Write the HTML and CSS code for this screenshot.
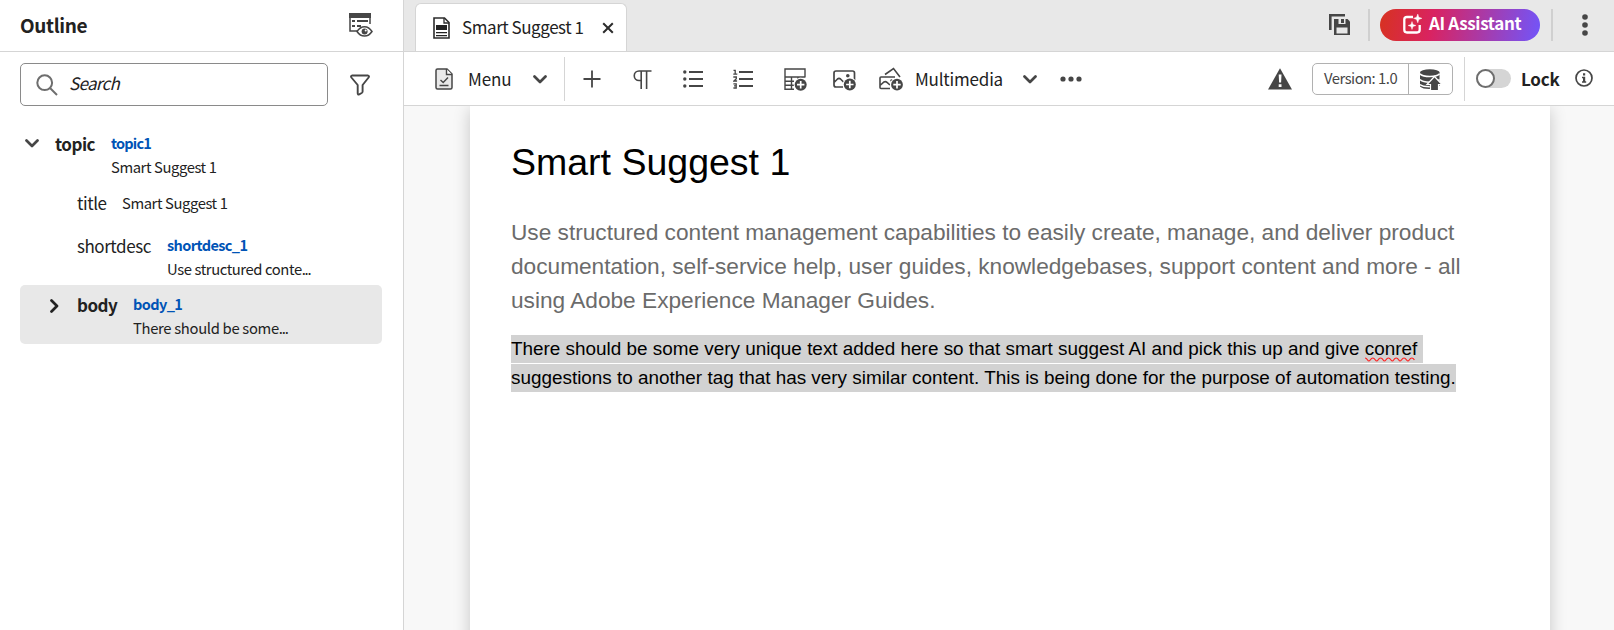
FILE: index.html
```html
<!DOCTYPE html>
<html lang="en">
<head>
<meta charset="utf-8">
<title>Smart Suggest 1</title>
<link rel="stylesheet" href="styles.css">
</head>
<body>
<div class="app">
  <aside class="sidebar">
    <header class="side-head">
      <h2 class="side-title">Outline</h2>
      <svg class="icon" width="24" height="26" viewBox="0 0 24 26"><path d="M0 1h22v5H0z" fill="#464646"/><path d="M1 5v14h7M21 5v7" fill="none" stroke="#464646" stroke-width="1.500"/><path d="M3 8h3v2H3zM8 8h11v2H8zM3 13h3v2H3zM8 13h4v2H8z" fill="#464646"/><path d="M8 19.500c4-6.500 11-6.500 15 0-4 6-11 6-15 0z" fill="#fff" stroke="#464646" stroke-width="1.500"/><circle cx="15.600" cy="19.400" r="3" fill="#464646"/><circle cx="16.700" cy="18.400" r="1" fill="#fff"/></svg>
    </header>
    <div class="search-row">
      <div class="search">
        <svg width="22" height="22" viewBox="0 0 22 22" fill="none" stroke="#6e6e6e" stroke-width="2"><circle cx="8.700" cy="8.700" r="7.400"/><path d="M14 14l7 7"/></svg>
        <span class="search-text">Search</span>
      </div>
      <svg width="20" height="22" viewBox="0 0 20 22" fill="none" stroke="#464646" stroke-width="1.900" stroke-linejoin="round"><path d="M2 1.500h16q1.600.7.6 2L12.600 11v6.500q0 1-.9 1.500l-2.500 1.300q-1.500.6-1.500-1V11L1.400 3.500q-1-1.300.6-2z"/></svg>
    </div>
    <div class="tree">
      <div class="node node-topic">
        <svg class="chev" width="14" height="9" viewBox="0 0 14 9"><path d="M1.500 1.500L7 7l5.500-5.500" /></svg>
        <span class="tag strong">topic</span>
        <div class="meta"><span class="id id-topic">topic1</span><span class="snip">Smart Suggest 1</span></div>
      </div>
      <div class="node node-title">
        <span class="tag">title</span>
        <div class="meta"><span class="snip">Smart Suggest 1</span></div>
      </div>
      <div class="node node-short">
        <span class="tag">shortdesc</span>
        <div class="meta"><span class="id">shortdesc_1</span><span class="snip">Use structured conte<span class="dots">...</span></span></div>
      </div>
      <div class="node node-body">
        <svg class="chev" width="9" height="14" viewBox="0 0 9 14"><path d="M1.500 1.500L7 7l-5.500 5.500"/></svg>
        <span class="tag strong">body</span>
        <div class="meta"><span class="id">body_1</span><span class="snip">There should be some<span class="dots">...</span></span></div>
      </div>
    </div>
  </aside>

  <main class="main">
    <div class="tabbar">
      <div class="tab">
        <svg width="17" height="22" viewBox="0 0 17 22"><path d="M1 1h10.500L16 5.500V21H1z" fill="#fff" stroke="#2c2c2c" stroke-width="1.600"/><path d="M11 1v5h5" fill="none" stroke="#2c2c2c" stroke-width="1.300"/><path d="M3 8h11v5H3zM3 15h11v1.300H3zM3 18h11v1.300H3z" fill="#222"/></svg>
        <span class="tab-label">Smart Suggest 1</span>
        <svg width="12" height="12" viewBox="0 0 12 12" stroke="#2c2c2c" stroke-width="2"><path d="M1.200 1.200l9.600 9.600M10.800 1.200l-9.600 9.600"/></svg>
      </div>
      <div class="tab-actions">
        <svg width="22" height="22" viewBox="0 0 22 22"><path d="M1.300 16V1.300H16" fill="none" stroke="#464646" stroke-width="2.600"/><path d="M5 5h13.500L21 7.500V21H5z" fill="#464646"/><path d="M9.500 5h7v5h-7zM7.500 13.500h11v6h-11z" fill="#e8e8e8"/><path d="M12 5h3v4h-3z" fill="#464646"/></svg>
        <i class="rule"></i>
        <div class="ai">
          <svg width="19" height="20" viewBox="0 0 19 20"><path d="M10 3H4Q1.300 3 1.300 5.500v10.300Q1.300 18.500 4 18.500h10q2.700 0 2.700-2.700V11" fill="none" stroke="#fff" stroke-width="2.300"/><path d="M14.800 0l1 3.300 3.200 1-3.200 1.200-1 3.300-1.300-3.300-3-1.200 3-1zM9 7.500l1 3 3 1-3 1-1 3-1-3-3-1 3-1z" fill="#fff" stroke="#fff" stroke-width=".4"/></svg>
          <span class="ai-label">AI Assistant</span>
        </div>
        <i class="rule"></i>
        <svg class="kebab" width="6" height="22" viewBox="0 0 6 22" fill="#464646"><circle cx="3" cy="3" r="2.800"/><circle cx="3" cy="11" r="2.800"/><circle cx="3" cy="19" r="2.800"/></svg>
      </div>
    </div>

    <div class="toolbar">
      <svg class="t-menu" width="18" height="22" viewBox="0 0 18 22"><path d="M2.500 1H12l5 5v13.500q0 1.500-1.500 1.500h-13Q1 21 1 19.500v-17Q1 1 2.500 1z" fill="#e9e9e9" stroke="#464646" stroke-width="1.500"/><path d="M11.500 1v5.500H17" fill="#fff" stroke="#464646" stroke-width="1.400"/><path d="M5.500 12l2.700 2.500L13 9.500M4.500 17.500h9" fill="none" stroke="#464646" stroke-width="1.400"/></svg>
      <span class="t-label w-menu">Menu</span>
      <svg class="chev t-chev" width="14" height="9" viewBox="0 0 14 9"><path d="M1.500 1.500L7 7l5.500-5.500"/></svg>
      <i class="divider"></i>
      <svg class="t-plus" width="18" height="18" viewBox="0 0 18 18" stroke="#464646" stroke-width="1.800"><path d="M9 .5v17M.5 9h17"/></svg>
      <svg class="t-para" width="19" height="19" viewBox="0 0 19 19" fill="none" stroke="#464646" stroke-width="1.600"><path d="M18.500 1H6a4.600 4.600 0 0 0 0 9.500h2.500M8.200 1v18M13.600 1v18"/></svg>
      <svg class="t-ul" width="20" height="18" viewBox="0 0 20 18"><path d="M6 2h14M6 9h14M6 16h14" stroke="#464646" stroke-width="1.900"/><g fill="#464646"><circle cx="1.800" cy="2" r="1.700"/><circle cx="1.800" cy="9" r="1.700"/><circle cx="1.800" cy="16" r="1.700"/></g></svg>
      <svg class="t-ol" width="20" height="20" viewBox="0 0 20 20"><path d="M6 3h14M6 10h14M6 17h14" stroke="#464646" stroke-width="1.900"/><g fill="none" stroke="#464646" stroke-width="1.300"><path d="M.5 1.400h1.700v4M.3 5.200h4M.3 8h3v1.700L.9 12h3.200M.4 14.800h2.800v4.200H.4M1 16.900h2"/></g></svg>
      <svg class="t-table" width="23" height="23" viewBox="0 0 23 23"><g fill="none" stroke="#464646" stroke-width="1.400"><path d="M21 9.500V1H1v20.300h9M1 9h20M1 13.200h9M1 17.200h9M7.500 9v12.300M14 9v3"/></g><circle cx="16.700" cy="16.700" r="7" fill="#fff"/><circle cx="16.700" cy="16.700" r="6" fill="#464646"/><path d="M16.700 13v7.400M13 16.700h7.400" stroke="#fff" stroke-width="1.700"/></svg>
      <svg class="t-img" width="23" height="23" viewBox="0 0 23 23"><path d="M10 18H3Q1 18 1 16V4q0-2 2-2h16.500q2 0 2 2v7M1 13.500l3.500-3.500q1.500-1.300 3 0l3.500 3.500" fill="none" stroke="#464646" stroke-width="1.700"/><circle cx="14.800" cy="6.800" r="1.800" fill="#464646"/><circle cx="16.800" cy="15.500" r="7" fill="#fff"/><circle cx="16.800" cy="15.500" r="6" fill="#464646"/><path d="M16.800 11.800v7.400M13.100 15.500h7.400" stroke="#fff" stroke-width="1.700"/></svg>
      <svg class="t-mm" width="24" height="24" viewBox="0 0 24 24"><g fill="none" stroke="#464646" stroke-width="1.600"><path d="M6 7.500L14.500 1.500l6.500 8.500M11 21.500H2q-1 0-1-1V11q0-1 1-1h14M1 18.500l4-3.500q1.500-1 3 .3L11 18"/></g><circle cx="12.500" cy="13.500" r="1.200" fill="#464646"/><circle cx="18" cy="17.700" r="7" fill="#fff"/><circle cx="18" cy="17.700" r="5.900" fill="#464646"/><path d="M18 14v7.400M14.300 17.700h7.400" stroke="#fff" stroke-width="1.700"/></svg>
      <span class="t-label w-mm">Multimedia</span>
      <svg class="chev t-chev2" width="14" height="9" viewBox="0 0 14 9"><path d="M1.500 1.500L7 7l5.500-5.500"/></svg>
      <svg class="t-dots" width="22" height="6" viewBox="0 0 22 6" fill="#464646"><circle cx="3" cy="3" r="2.600"/><circle cx="11" cy="3" r="2.600"/><circle cx="19" cy="3" r="2.600"/></svg>
      <div class="t-right">
        <svg class="t-warn" width="24" height="22" viewBox="0 0 24 22"><path d="M12 0.300l12 21.200H0z" fill="#464646"/><path d="M10.700 6.500h2.800l-.4 8h-2zM10.700 16.200h2.800v2.700h-2.800z" fill="#fff"/></svg>
        <div class="version">
          <span class="v-text">Version: 1.0</span>
          <span class="v-icon"><svg width="22" height="22" viewBox="0 0 22 22"><path d="M0 3.500V17.500q2.500 2.500 9.500 2.500h.5V3.500zM10 3.500V17h9.500V3.500z" fill="#464646"/><ellipse cx="9.800" cy="3.300" rx="9.800" ry="3" fill="#464646"/><path d="M0 4.800q2 2.700 9.800 2.700t9.800-2.700M0 10.500q2 2.700 9.800 2.700t9.800-2.700M0 15.500q2 2.200 9.800 2.200" fill="none" stroke="#fff" stroke-width="1.500"/><path d="M14.500 7.500l7.500 8h-3.500v6h-8v-6H7z" fill="#464646" stroke="#fff" stroke-width="1.200"/></svg></span>
        </div>
        <i class="divider"></i>
        <span class="toggle"></span>
        <span class="t-label strong w-lock">Lock</span>
        <svg class="t-info" width="18" height="18" viewBox="0 0 18 18"><circle cx="9" cy="9" r="8" fill="none" stroke="#464646" stroke-width="1.700"/><path d="M8 4.200h2.200v2.200H8zM7 7.700h3.200v4.500h1v1.500H7v-1.500h1V9.200H7z" fill="#464646"/></svg>
      </div>
    </div>

    <div class="canvas">
      <article class="page">
        <h1>Smart Suggest 1</h1>
        <p class="shortdesc">Use structured content management capabilities to easily create, manage, and deliver product<br>documentation, self-service help, user guides, knowledgebases, support content and more - all<br>using Adobe Experience Manager Guides.</p>
        <p class="para"><mark>There should be some very unique text added here so that smart suggest AI and pick this up and give <span class="spell">conref<svg width="53" height="5" viewBox="0 0 53 5"><path d="M0 1q1.400 0 2.600 2t2.600 0 2.600-2 2.600 2 2.600 0 2.600-2 2.600 2 2.600 0 2.600-2 2.600 2 2.600 0 2.600-2 2.600 2 2.600 0 2.600-2 2.600 2 2.600 0 2.600-2 2.600 2" fill="none" stroke="#f22" stroke-width="1.200"/></svg></span>&nbsp;</mark><br><mark>suggestions to another tag that has very similar content. This is being done for the purpose of automation testing.</mark></p>
      </article>
    </div>
  </main>
</div>
</body>
</html>
```
FILE: styles.css
```css
* { box-sizing: border-box; }
body {
  margin: 0;
  font-family: "Noto Sans CJK SC", "Noto Sans", sans-serif;
  color: #222;
  background: #fff;
}
svg { display: block; flex: none; }
.app { display: flex; width: 1614px; height: 630px; overflow: hidden; }
.app span { white-space: nowrap; }

/* sidebar */
.sidebar { width: 404px; flex: none; border-right: 1px solid #d5d5d5; }
.side-head { display: flex; align-items: flex-start; height: 52px; padding: 12px 0 0 20px; border-bottom: 1px solid #d5d5d5; }
.side-title { margin: -1px 0 0; width: 329px; font-size: 19px; line-height: 27px; font-weight: 700; letter-spacing: -.35px; }
.search-row { display: flex; align-items: center; padding: 11px 0 0 20px; gap: 22px; }
.search { display: flex; align-items: center; gap: 11px; width: 308px; height: 43px; padding-left: 15px; border: 1px solid #8a8a8a; border-radius: 5px; }
.search-text { font-style: italic; font-size: 17px; line-height: 24px; letter-spacing: -.7px; margin-top: -3px; }
.tree { padding: 24px 0 0 20px; }
.node { display: flex; align-items: flex-start; width: 362px; border-radius: 5px; }
.chev { fill: none; stroke: #464646; stroke-width: 2.700; stroke-linecap: round; stroke-linejoin: round; }
.tag { margin-top: 1px; font-size: 17px; line-height: 24px; letter-spacing: -.45px; }
.strong { font-weight: 700; }
.tag.strong { letter-spacing: -.5px; }
.meta { display: flex; flex-direction: column; }
.id { color: #0054b6; font-weight: 700; font-size: 14.500px; line-height: 24px; letter-spacing: -.6px; }
.id-topic { letter-spacing: -.8px; }
.snip { font-size: 14.800px; line-height: 24px; letter-spacing: -.42px; word-spacing: .1px; }
.dots { letter-spacing: -1.200px; }
.node-topic { height: 56px; padding: 1px 0 0 5px; }
.node-topic .chev { margin: 8px 16px 0 0; }
.node-topic .tag { width: 56px; }
.node-title { height: 43px; padding: 4px 0 0 57px; }
.node-title .tag { width: 45px; }
.node-title .snip { margin-top: 1px; }
.node-short { height: 56px; padding: 4px 0 0 57px; }
.node-short .tag { width: 90px; }
.node-body { height: 59px; padding: 7px 0 0 30px; background: #e8e8e8; }
.node-body .chev { margin: 7px 18px 0 0; stroke: #222; }
.node-body .tag { width: 56px; }
.node-body .snip { letter-spacing: -.33px; }

/* tabs */
.main { flex: 1; min-width: 0; display: flex; flex-direction: column; }
.tabbar { display: flex; justify-content: space-between; height: 52px; background: #e8e8e8; border-bottom: 1px solid #d5d5d5; padding: 3px 0 0 11px; flex: none; }
.tab { display: flex; align-items: center; width: 212px; height: 48px; background: #fff; border: 1px solid #d5d5d5; border-bottom: 0; border-radius: 6px 6px 0 0; padding-left: 17px; }
.tab-label { width: 152px; margin-top: -2px; padding-left: 12px; font-size: 17px; line-height: 24px; letter-spacing: -.43px; word-spacing: -.2px; }
.tab-actions { display: flex; align-items: flex-start; padding: 6px 26px 0 0; }
.tab-actions > svg { margin-top: 5px; }
.rule { width: 2px; height: 32px; background: #d0d0d0; }
.tab-actions .rule:nth-of-type(1) { margin: 0 10px 0 17px; }
.tab-actions .rule:nth-of-type(2) { margin: 0 29px 0 11px; }
.ai { display: flex; align-items: center; gap: 7px; width: 160px; height: 32px; padding-left: 23px; border-radius: 16px; color: #fff; background: linear-gradient(100deg, #d73220 0%, #d92361 33%, #7155fa 100%); }
.ai svg { margin-top: -3px; }
.ai-label { font-size: 17px; font-weight: 700; line-height: 24px; letter-spacing: -.35px; margin-top: -5px; }

/* toolbar */
.toolbar { display: flex; align-items: center; height: 54px; flex: none; border-bottom: 1px solid #d5d5d5; padding-left: 31px; background: #fff; }
.toolbar > svg { margin-top: 1px; }
.t-label { font-size: 17px; line-height: 24px; }
.w-menu { margin-left: 15px; width: 65px; letter-spacing: -.1px; }
.divider { width: 1px; height: 44px; background: #d5d5d5; flex: none; }
.t-chev { margin-right: 17px; }
.t-plus { margin-left: 18px; }
.t-para { margin-left: 32px; }
.t-ul { margin-left: 31px; }
.t-ol { margin-left: 30px; }
.t-table { margin-left: 31px; }
.toolbar > .t-img { margin: 4px 0 0 26px; }
.t-mm { margin-left: 23px; }
.w-mm { margin-left: 12px; width: 108px; letter-spacing: -.2px; }
.t-dots { margin-left: 23px; }
.t-right { display: flex; align-items: center; margin-left: auto; padding-right: 20px; }
.version { display: flex; width: 141px; height: 32px; margin: 0 11px 0 20px; border: 1px solid #b1b1b1; border-radius: 5px; }
.v-text { width: 95px; padding-left: 11px; font-size: 14.800px; line-height: 27px; letter-spacing: -.5px; color: #464646; }
.v-icon { flex: 1; border-left: 1px solid #b1b1b1; padding: 5px 0 0 11px; }
.toggle { width: 35px; height: 19px; margin: -1px 0 0 11px; border-radius: 10px; background: #d5d5d5; display: flex; }
.toggle::before { content: ""; box-sizing: border-box; width: 19px; height: 19px; border: 2px solid #6e6e6e; border-radius: 50%; background: #fff; }
.w-lock { margin-left: 10px; width: 54px; letter-spacing: -.25px; }
.t-info { margin: -1px 1px 0 0; }

/* document */
.canvas { flex: 1; min-height: 0; overflow: hidden; background: #f8f8f8; padding: 0 64px 0 66px; }
.page { width: 1080px; height: 560px; padding: 32px 0 0 41px; background: #fff; box-shadow: 0 3px 16px rgba(0, 0, 0, .2); font-family: "Liberation Sans", Arial, sans-serif; color: #000; }
.page h1 { margin: 0; font-size: 37.500px; line-height: 48px; font-weight: 400; }
.shortdesc { margin: 29px 0 0; font-size: 22.670px; line-height: 34px; color: #6b6b6b; white-space: nowrap; }
.para { margin: 18px 0 0; font-size: 18.900px; line-height: 29px; white-space: nowrap; }
.para mark { display: inline-block; height: 28px; line-height: 28px; vertical-align: top; background: #d2d2d2; color: #000; }
.spell { position: relative; }
.spell svg { position: absolute; left: 0; bottom: -3px; }
```
